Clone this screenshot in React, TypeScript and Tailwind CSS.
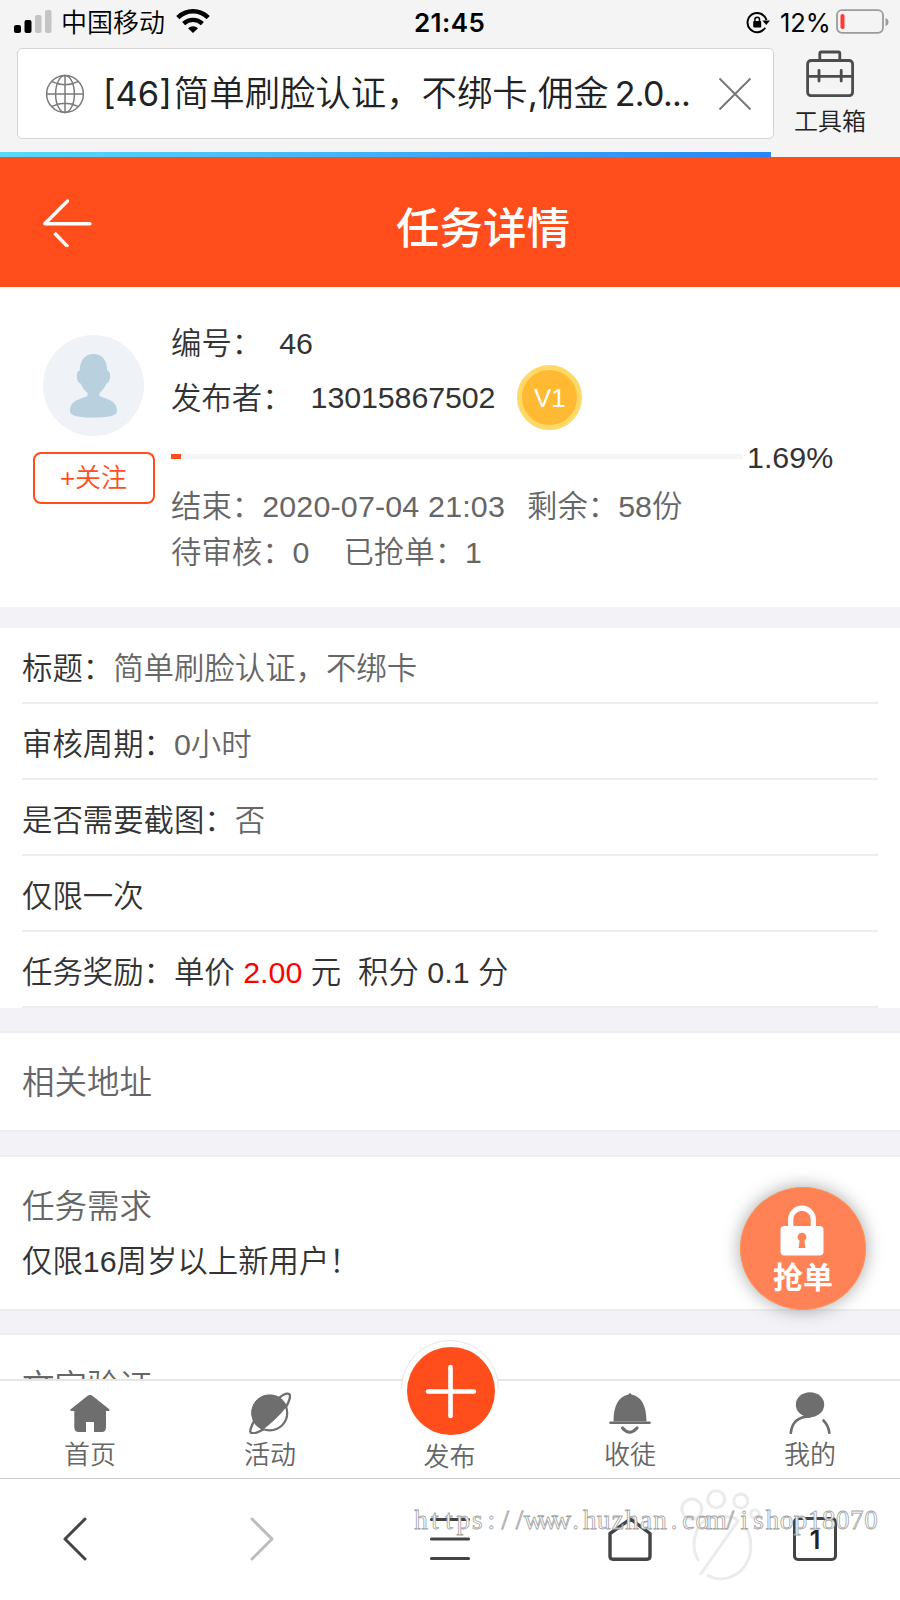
import React from 'react';

interface InfoRow {
  label: string;
  value?: string;
}

const infoRows: InfoRow[] = [
  { label: '标题：', value: '简单刷脸认证，不绑卡' },
  { label: '审核周期：', value: '0小时' },
  { label: '是否需要截图：', value: '否' },
  { label: '仅限一次' },
];

const WATERMARK = 'https://www.huzhan.com/ishop18070';
const watermarkX = WATERMARK.split('').map((_, i) => i * 14.06 + 7).join(' ');

const StatusBar: React.FC = () => (
  <div className="flex h-[48px] items-start pt-[8px] pl-[14px] text-black">
    <svg width="38" height="26" viewBox="0 0 38 26">
      <rect x="0" y="17" width="7" height="8" rx="2" fill="#000" />
      <rect x="10.5" y="12" width="7" height="13" rx="2" fill="#000" />
      <rect x="21" y="7" width="6.5" height="18" rx="2" fill="#c4c4c4" />
      <rect x="31" y="2" width="6.5" height="23" rx="2" fill="#c4c4c4" />
    </svg>
    <span className="ml-[9px] mt-px text-[26px] leading-[28px]">中国移动</span>
    <svg className="ml-[11px]" width="34" height="26" viewBox="0 0 34 26">
      <path d="M1.8 9.6 C10.5 1.2 23.5 1.2 32.2 9.6" fill="none" stroke="#000" strokeWidth="4.6" />
      <path d="M7.6 15.6 C13 10.6 21 10.6 26.4 15.6" fill="none" stroke="#000" strokeWidth="4.4" />
      <path d="M17 25 L12 20.2 Q17 16.2 22 20.2 Z" fill="#000" />
    </svg>
    <span className="ml-[204px] w-[73px] font-['Inter'] text-[26px] font-semibold leading-[30px] tracking-[0.4px]">21:45</span>
    <svg className="ml-[259px] mt-[3px]" width="24" height="24" viewBox="0 0 24 24">
      <path d="M20.4 9 A9.6 9.6 0 1 0 19.2 16.8" fill="none" stroke="#000" strokeWidth="2" />
      <path d="M16.4 9.6 H24 L20.2 14 Z" fill="#000" />
      <rect x="7.2" y="10" width="8" height="6.6" rx="1" fill="#000" />
      <path d="M8.9 10.5 V8.5 a2.3 2.3 0 0 1 4.6 0 V10.5" fill="none" stroke="#000" strokeWidth="1.5" />
    </svg>
    <span className="ml-[10px] w-[56px] font-['Inter'] text-[25.5px] font-normal leading-[30px] tracking-[-0.1px]">12%</span>
    <svg width="54" height="28" viewBox="0 0 54 28">
      <rect x="1" y="2.2" width="46" height="22.6" rx="5" fill="none" stroke="#9b9b9b" strokeWidth="1.8" />
      <rect x="4.5" y="6" width="4" height="15" rx="1.8" fill="#ff3b30" />
      <path d="M49.5 10 q3 1 3 4 t-3 4 Z" fill="#9b9b9b" />
    </svg>
  </div>
);

const AddressBar: React.FC = () => (
  <div className="flex h-[104px] pl-[17px]">
    <div className="flex h-[91px] w-[757px] items-center rounded-[5px] border border-[#d4d4d4] bg-white pl-[27px]">
      <svg width="40" height="40" viewBox="0 0 40 40" fill="none" stroke="#7b7b7b" strokeWidth="1.5">
        <circle cx="20" cy="20" r="18.4" />
        <ellipse cx="20" cy="20" rx="9.4" ry="18.4" />
        <path d="M20 1.6 V38.4 M1.6 20 H38.4 M7 7.6 Q20 14 33 7.6 M7 32.4 Q20 26 33 32.4" />
      </svg>
      <div className="ml-[18px] w-[590px] whitespace-nowrap font-['Inter','Noto_Sans_CJK_SC',sans-serif] text-[35.4px] leading-[50px] text-[#222]">
        <span className="mr-[2px] text-[34.5px] font-normal">[46]</span>简单刷脸认证，不绑卡<span className="font-normal">,</span>佣金<span className="ml-[6px] text-[34px] font-normal tracking-[-0.7px]">2.0...</span>
      </div>
      <svg className="ml-[25px]" width="34" height="34" viewBox="0 0 34 34">
        <path d="M1.5 1.5 L32.5 32.5 M32.5 1.5 L1.5 32.5" stroke="#777" strokeWidth="1.9" />
      </svg>
    </div>
    <div className="ml-[19px] flex w-[74px] flex-col items-center pt-[2px]">
      <svg width="48" height="47" viewBox="0 0 48 47" fill="none" stroke="#4c4c4c" strokeWidth="2.8">
        <rect x="1.6" y="10.5" width="45" height="35.2" rx="3.5" />
        <path d="M13.8 10 V3.5 Q13.8 2 15.3 2 H32.3 Q33.8 2 33.8 3.5 V10 M2 26.3 H46" />
        <path d="M13 20.5 V31 M35.2 20.5 V31" strokeLinecap="round" />
      </svg>
      <span className="mt-[11px] text-[24px] leading-[28px] text-[#222]">工具箱</span>
    </div>
  </div>
);

const TitleBar: React.FC = () => (
  <div className="flex h-[130px] items-center bg-[#ff4d1c] pl-[42px]">
    <svg width="52" height="50" viewBox="0 0 52 50" fill="none" stroke="#fff" strokeWidth="3.4">
      <path d="M25.5 4 L2.8 26.8 H48" strokeLinejoin="round" strokeLinecap="round" />
      <path d="M12.5 36 L26 50" />
    </svg>
    <h1 className="ml-[302px] mt-[14px] text-[43.5px] font-medium leading-[60px] text-white">任务详情</h1>
  </div>
);

const Publisher: React.FC = () => (
  <section className="flex h-[320px] bg-white pl-[32px] text-[30.4px] text-[#333]">
    <div className="flex w-[122px] flex-col items-center pt-[48px]">
      <svg width="102" height="102" viewBox="0 0 102 102">
        <circle cx="51.5" cy="50.5" r="50.5" fill="#eff3f7" />
        <path
          d="M51.5 19 C60 19 65 25 65.3 35.5 C69.5 36 69 47.5 64.5 48.5 C62.5 53 60 56 57.5 58 V61 C63 64 75 64.5 75 76 C75 80 70 82.5 51.5 82.5 C33 82.5 28 80 28 76 C28 64.5 40 64 45.5 61 V58 C43 56 40.5 53 38.5 48.5 C34 47.5 33.5 36 37.7 35.5 C38 25 43 19 51.5 19 Z"
          fill="#b9d1de"
        />
      </svg>
      <button className="mt-[15px] ml-[1px] h-[52px] w-[122px] rounded-[8px] border-2 border-[#ff4d1c] text-[26px] leading-[48px] text-[#ff4d1c]">
        +关注
      </button>
    </div>
    <div className="ml-[17px] flex flex-col">
      <div className="mt-[34px] h-[43px] leading-[44px]">
        编号：<span className="ml-[17px]">46</span>
      </div>
      <div className="flex h-[66px] items-center">
        <span className="mt-[3px]">发布者：</span>
        <span className="ml-[18px] mt-px tracking-[-0.1px]">13015867502</span>
        <span className="ml-[22px] flex size-[65px] items-center justify-center rounded-full border-[5px] border-[#ffd966] bg-[#ffb932] pt-[3px] text-[26px] text-white">
          V1
        </span>
      </div>
      <div className="flex h-[52px] items-center">
        <div className="h-[5px] w-[572px] bg-[#f5f5f5]">
          <div className="h-full w-[1.69%] bg-[#ff4d1c]" />
        </div>
        <span className="ml-[4px] mt-[4px]">1.69%</span>
      </div>
      <div className="h-[46px] whitespace-pre leading-[48px] text-[#666]">
        结束：<span className="tracking-[0.18px]">2020-07-04 21:03</span><span className="ml-[22px]">剩余：58份</span>
      </div>
      <div className="h-[46px] leading-[48px] text-[#666]">
        待审核：0<span className="ml-[34px]">已抢单：1</span>
      </div>
    </div>
  </section>
);

const TaskInfo: React.FC = () => (
  <section className="bg-white pl-[22px] pr-[22px] text-[30.4px] text-[#333]">
    {infoRows.map((row) => (
      <div key={row.label} className="h-[76px] border-b-2 border-[#ebedf0] leading-[81px]">
        {row.label}
        {row.value && <span className="text-[#666]">{row.value}</span>}
      </div>
    ))}
    <div className="h-[76px] whitespace-pre border-b-2 border-[#ebedf0] leading-[81px]">
      任务奖励：单价 <span className="text-[#ff0000]">2.00</span> 元  积分 0.1 分
    </div>
  </section>
);

const GrabButton: React.FC = () => (
  <button className="absolute left-[740px] top-[1187px] flex h-[123px] w-[126px] flex-col items-center rounded-[50%] border border-[#ff9050] bg-[#ff8257] pt-[16px] text-white shadow-[0_0_18px_rgba(0,0,0,0.35)]">
    <svg className="mr-[2px]" width="44" height="52" viewBox="0 0 44 52">
      <path d="M10.7 24 V15.5 a11.3 11.3 0 0 1 22.6 0 V24" fill="none" stroke="#fff" strokeWidth="5.2" />
      <rect x="0.5" y="22" width="43" height="29.5" rx="4" fill="#fff" />
      <path d="M22 28.8 a4.3 4.3 0 0 1 2.4 7.9 l1 7.4 h-6.8 l1-7.4 a4.3 4.3 0 0 1 2.4-7.9 Z" fill="#ff8257" />
    </svg>
    <span className="mt-[4px] text-[30px] font-bold leading-[36px]">抢单</span>
  </button>
);

const HomeIcon = () => (
  <svg width="42" height="42" viewBox="0 0 42 42" fill="#6e6e6e">
    <path d="M18 4.2 Q21 2 24 4.2 L40 17 Q41.5 19 39 19 H37 V35 Q37 40 33 40 H25 V30 H17 V40 H9.5 Q5.3 40 5.3 35 V19 H3 Q0 19 2 17 Z" />
  </svg>
);

const PlanetIcon = () => (
  <svg width="42" height="42" viewBox="0 0 42 42">
    <circle cx="20.8" cy="21" r="17.4" fill="none" stroke="#6e6e6e" strokeWidth="2.2" />
    <path d="M14 37.5 A18 18 0 1 1 37.5 15 Q27 28 14 37.5 Z" fill="#6e6e6e" />
    <path d="M30 6 C36 1 43 -1 40.5 7 C39.8 10 38.5 12.5 37 15 M15 37 C5 43 -1 43 2.2 35.5 C3 33 4 31 5 29.5" fill="none" stroke="#6e6e6e" strokeWidth="2.4" />
  </svg>
);

const BellIcon = () => (
  <svg width="42" height="42" viewBox="0 0 42 42">
    <path d="M19.5 2.5 Q21 -0.5 22.5 2.5 C32 4.5 37.5 13 37.5 29.5 H4.5 C4.5 13 10 4.5 19.5 2.5 Z" fill="#6e6e6e" />
    <path d="M1.5 30.7 H40.5" fill="none" stroke="#6e6e6e" strokeWidth="2.6" strokeLinecap="round" />
    <path d="M13.5 36 Q20.5 44.5 28 36" fill="none" stroke="#6e6e6e" strokeWidth="3.2" strokeLinecap="round" />
  </svg>
);

const PersonIcon = () => (
  <svg width="42" height="42" viewBox="0 0 42 42">
    <ellipse cx="21" cy="12.7" rx="14.2" ry="12.5" fill="#6e6e6e" />
    <path d="M1.8 40.8 C3 30 10 24.5 21 24.5 M34.5 28.5 Q39.5 33.5 40.3 40.8" fill="none" stroke="#6e6e6e" strokeWidth="2.6" strokeLinecap="round" />
  </svg>
);

interface TabProps {
  label: string;
  children: React.ReactNode;
}

const Tab: React.FC<TabProps> = ({ label, children }) => (
  <div className="flex flex-1 flex-col items-center pt-[11px]">
    {children}
    <span className="mt-[5px] text-[26px] leading-[32px]">{label}</span>
  </div>
);

const TabBar: React.FC = () => (
  <nav className="relative flex h-[99px] border-t-2 border-[#e6e6e6] bg-white text-[#666]">
    <Tab label="首页"><HomeIcon /></Tab>
    <Tab label="活动"><PlanetIcon /></Tab>
    <div className="relative flex flex-1 flex-col items-center pt-[60px]">
      <svg className="absolute left-[40px] top-[-42px]" width="100" height="100" viewBox="0 0 100 100">
        <circle cx="50" cy="50" r="48.5" fill="#fff" />
        <path d="M1.5 50 A48.5 48.5 0 0 1 98.5 50" fill="none" stroke="#e6e6e6" strokeWidth="1" />
        <circle cx="51" cy="52" r="44" fill="#ff4d1c" />
        <path d="M28 52.5 H74 M50.5 28 V77" stroke="#fff" strokeWidth="4.6" strokeLinecap="round" />
      </svg>
      <span className="mr-px text-[26px] leading-[32px]">发布</span>
    </div>
    <Tab label="收徒"><BellIcon /></Tab>
    <Tab label="我的"><PersonIcon /></Tab>
  </nav>
);

const BrowserBar: React.FC = () => (
  <div className="relative h-[122px] border-t border-[#ccc] bg-white">
    <div className="flex pt-[38px] pl-[63px]">
      <svg width="24" height="44" viewBox="0 0 24 44" fill="none" stroke="#444" strokeWidth="3" strokeLinecap="round" strokeLinejoin="round">
        <path d="M22 2 L2 22 L22 42" />
      </svg>
      <svg className="ml-[163px]" width="24" height="44" viewBox="0 0 24 44" fill="none" stroke="#bdbdbd" strokeWidth="3" strokeLinecap="round" strokeLinejoin="round">
        <path d="M2 2 L22 22 L2 42" />
      </svg>
      <svg className="ml-[155px]" width="42" height="44" viewBox="0 0 42 44" stroke="#444" strokeWidth="3.2" strokeLinecap="round">
        <path d="M2.5 2.5 H39.5 M2.5 22 H39.5 M2.5 41.5 H39.5" />
      </svg>
      <svg className="ml-[137px]" width="44" height="44" viewBox="0 0 44 44" fill="none" stroke="#444" strokeWidth="3.4" strokeLinejoin="round">
        <path d="M22.5 2 L42 16.5 V39 Q42 42.2 39 42.2 H5 Q2 42.2 2 39 V16.5 Z" />
      </svg>
      <div className="ml-[141px] flex size-[44px] items-center justify-center rounded-[5px] border-[3px] border-[#444] pt-[2px] font-['Inter'] text-[25px] font-semibold leading-none text-[#222]">
        1
      </div>
    </div>
    <svg className="absolute left-[674px] top-[6px]" width="96" height="102" viewBox="0 0 96 102" fill="none" stroke="#ebebeb" strokeWidth="3">
      <circle cx="17.8" cy="24" r="10" />
      <circle cx="42.3" cy="14.2" r="8.5" />
      <circle cx="66.8" cy="16" r="7" />
      <circle cx="81" cy="29" r="4.2" />
      <path d="M25 76 C19 68 19 56 22 48 C26 36 34 31.5 48 31.5 C57 31.5 61 32 64 36 L26 90 M72 43 C78 51 78 67 74 75 C68 91 48 99 33 90" />
    </svg>
    <svg className="absolute left-[414px] top-[20px]" width="470" height="44" viewBox="0 0 470 44">
      <text
        x={watermarkX}
        y="30"
        textAnchor="middle"
        fill="#fff"
        stroke="#a3a3a3"
        strokeWidth="0.8"
        className="font-['Liberation_Serif',serif] text-[27px]"
      >
        {WATERMARK}
      </text>
    </svg>
  </div>
);

const App: React.FC = () => {
  return (
    <div
      lang="zh-CN"
      className="relative flex h-[1600px] w-[900px] flex-col overflow-hidden bg-[#f4f4f4] font-['Liberation_Sans','Noto_Sans_CJK_SC',sans-serif] font-[350]"
    >
      <StatusBar />
      <AddressBar />
      {/* ページの読み込み進捗 */}
      <div className="h-[5px] w-[771px] shrink-0 bg-linear-to-r from-[#5cd8f8] to-[#2a85f5]" />
      <TitleBar />
      <main className="h-[1092px] overflow-hidden bg-[#f2f2f7]">
        <Publisher />
        <div className="h-[21px]" />
        <TaskInfo />
        <section className="mt-[23px] h-[101px] border-y-2 border-[#ebedf0] bg-white pl-[22px] text-[32.5px] leading-[100px] text-[#666]">
          相关地址
        </section>
        <section className="mt-[23px] h-[156px] border-y-2 border-[#ebedf0] bg-white pl-[22px] pt-[23px]">
          <h2 className="text-[32.5px] leading-[54px] text-[#666]">任务需求</h2>
          <p className="text-[30.4px] leading-[54px] text-[#333]">仅限16周岁以上新用户！</p>
        </section>
        <section className="mt-[22px] h-[156px] border-y-2 border-[#ebedf0] bg-white pl-[22px] pt-[25px] text-[32.5px] leading-[54px] text-[#666]">
          文字验证
        </section>
      </main>
      <TabBar />
      <BrowserBar />
      <GrabButton />
    </div>
  );
};

export default App;
